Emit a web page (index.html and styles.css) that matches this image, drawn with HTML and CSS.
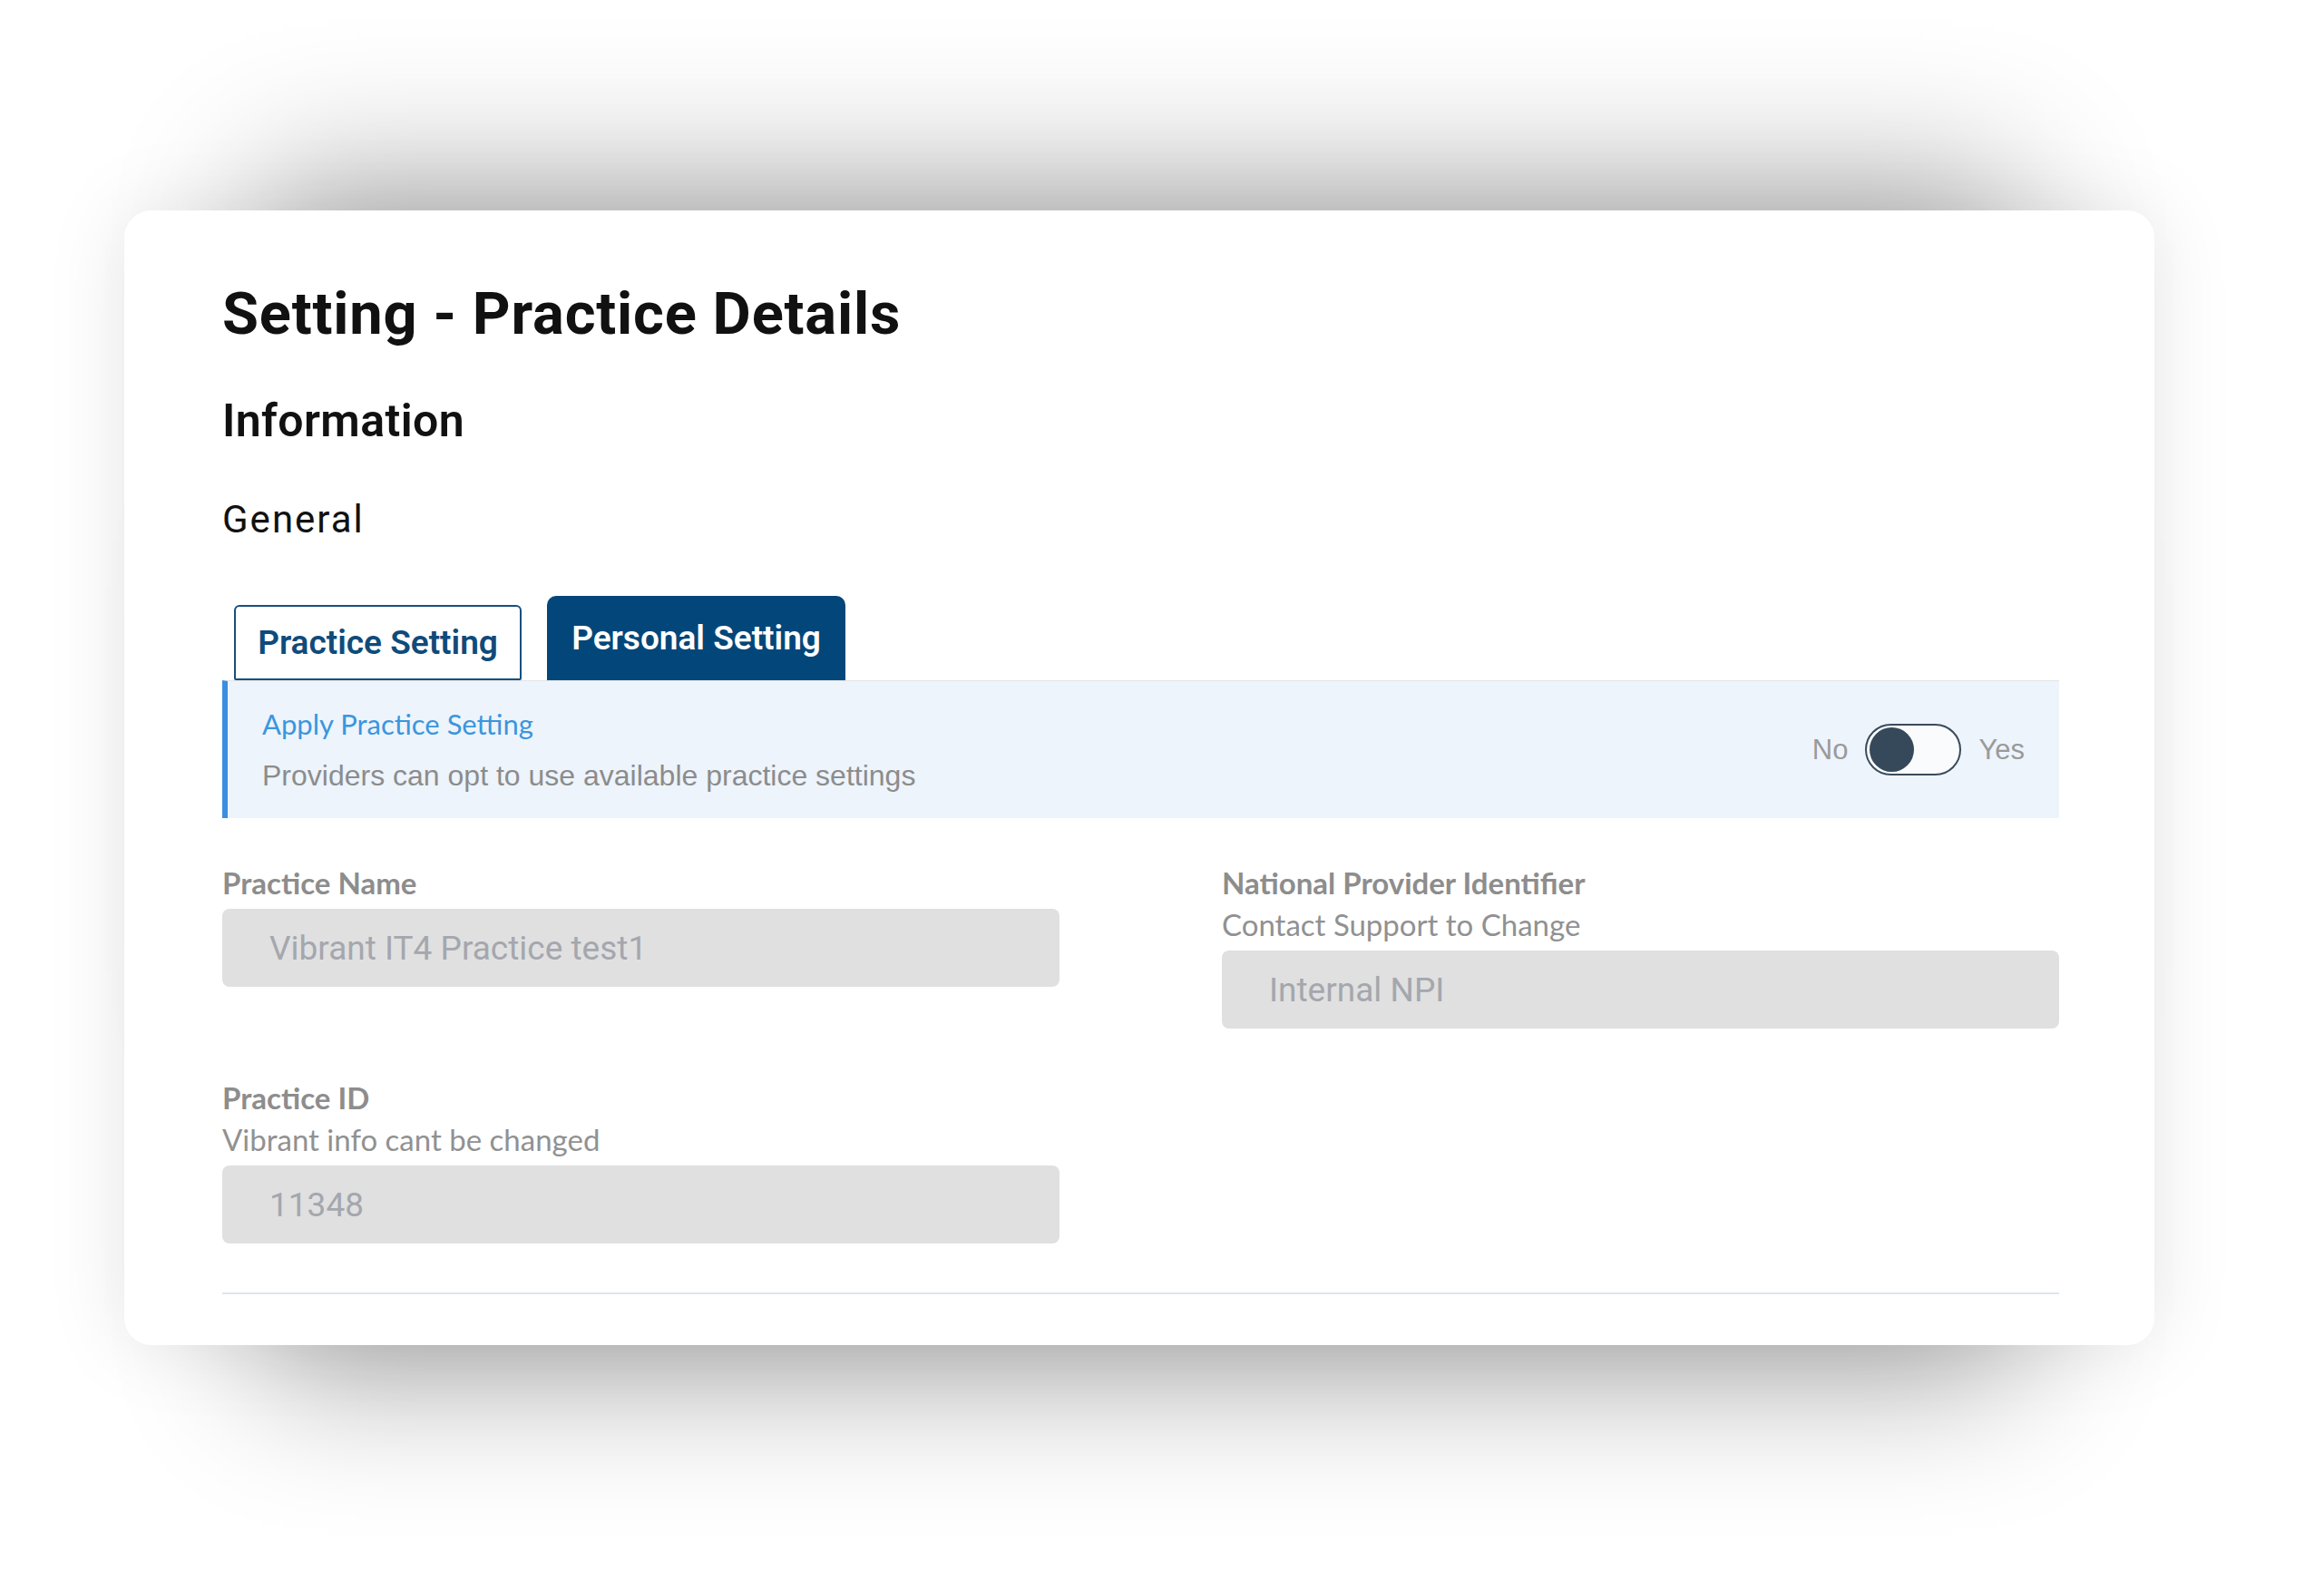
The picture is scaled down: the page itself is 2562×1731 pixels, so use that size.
FILE: index.html
```html
<!DOCTYPE html>
<html lang="en">
<head>
  <meta charset="UTF-8">
  <meta name="viewport" content="width=device-width, initial-scale=1.0">
  <title>Setting - Practice Details</title>
  <link rel="stylesheet" href="styles.css">
</head>
<body>
  <div class="stage">
    <div class="card">
      <h1 class="page-title">Setting - Practice Details</h1>
      <h2 class="section-title">Information</h2>
      <h3 class="group-title">General</h3>

      <div class="tabs">
        <button class="tab">Practice Setting</button>
        <button class="tab tab-active">Personal Setting</button>
      </div>

      <div class="apply-box">
        <div class="apply-text">
          <div class="apply-title">Apply Practice Setting</div>
          <div class="apply-desc">Providers can opt to use available practice settings</div>
        </div>
        <div class="switch-row">
          <span class="switch-label">No</span>
          <span class="switch"><span class="switch-knob"></span></span>
          <span class="switch-label">Yes</span>
        </div>
      </div>

      <div class="fields">
        <div class="field">
          <label class="field-label">Practice Name</label>
          <input class="field-input" type="text" value="Vibrant IT4 Practice test1" readonly>
        </div>
        <div class="field">
          <label class="field-label">National Provider Identifier</label>
          <div class="field-hint">Contact Support to Change</div>
          <input class="field-input" type="text" placeholder="Internal NPI" readonly>
        </div>
        <div class="field">
          <label class="field-label">Practice ID</label>
          <div class="field-hint">Vibrant info cant be changed</div>
          <input class="field-input" type="text" value="11348" readonly>
        </div>
      </div>

      <hr class="divider">
    </div>
  </div>
</body>
</html>
```

FILE: styles.css
```css
* {
  box-sizing: border-box;
  margin: 0;
  padding: 0;
}

html, body {
  min-height: 100%;
}

body {
  background-color: #ffffff;
  font-family: Roboto, "Noto Sans", sans-serif;
  color: #111111;
}

.stage {
  min-height: 1731px;
  padding: 232px 0 0 137px;
}

.card {
  width: 2238px;
  height: 1251px;
  background-color: #ffffff;
  border-radius: 30px;
  padding: 0 105px 0 108px;
  box-shadow:
    0 -190px 150px -150px rgba(0, 0, 0, 0.30),
    0 190px 150px -150px rgba(0, 0, 0, 0.33),
    0 0 90px rgba(0, 0, 0, 0.10);
}

.page-title {
  font-size: 65px;
  line-height: 65px;
  font-weight: 700;
  letter-spacing: 0.8px;
  padding-top: 82px;
}

.section-title {
  font-size: 50px;
  line-height: 50px;
  font-weight: 600;
  letter-spacing: 0.4px;
  margin-top: 60px;
}

.group-title {
  font-size: 42px;
  line-height: 42px;
  font-weight: 400;
  letter-spacing: 2px;
  margin-top: 63px;
}

.tabs {
  display: flex;
  align-items: flex-end;
  gap: 28px;
  padding-left: 13px;
  margin-top: 63px;
}

.tab {
  display: flex;
  align-items: center;
  justify-content: center;
  font-family: Roboto, "Noto Sans", sans-serif;
  font-size: 37px;
  font-weight: 600;
  cursor: pointer;
}

.tab:not(.tab-active) {
  width: 317px;
  height: 83px;
  background-color: #ffffff;
  color: #0f4b7b;
  border: 2px solid #174f7e;
  border-radius: 6px 6px 2px 2px;
}

.tab-active {
  width: 329px;
  height: 93px;
  background-color: #03477a;
  color: #ffffff;
  border: none;
  border-radius: 10px 10px 0 0;
}

.apply-box {
  display: flex;
  align-items: center;
  justify-content: space-between;
  height: 152px;
  background-color: #edf4fc;
  border-top: 1px solid #e2e4e7;
  border-left: 6px solid #3a8ee0;
  padding: 0 38px 0 38px;
}

.apply-title {
  font-family: Lato, sans-serif;
  font-size: 31px;
  line-height: 35px;
  color: #3b96dd;
}

.apply-desc {
  font-family: "Liberation Sans", Arial, sans-serif;
  font-size: 32px;
  line-height: 35px;
  color: #8c8c8c;
  margin-top: 22px;
}

.switch-row {
  display: flex;
  align-items: center;
  gap: 19px;
}

.switch-label {
  font-family: "Liberation Sans", Arial, sans-serif;
  font-size: 31px;
  color: #9a9a9a;
}

.switch {
  display: flex;
  align-items: center;
  width: 106px;
  height: 57px;
  border: 2px solid #3a4b5b;
  border-radius: 29px;
  background-color: #f9fbfd;
  padding: 0 0 0 3px;
}

.switch-knob {
  width: 49px;
  height: 49px;
  border-radius: 50%;
  background-color: #36495a;
}

.fields {
  display: grid;
  grid-template-columns: 923px 923px;
  column-gap: 179px;
  row-gap: 57px;
  margin-top: 52px;
}

.field {
  display: flex;
  flex-direction: column;
}

.field-label {
  font-family: Lato, sans-serif;
  font-size: 33px;
  line-height: 38px;
  font-weight: 700;
  color: #8d8d8d;
}

.field-hint {
  font-family: Lato, sans-serif;
  font-size: 33px;
  line-height: 38px;
  color: #919191;
  margin-top: 8px;
}

.field-input {
  height: 86px;
  margin-top: 10px;
  background-color: #e0e0e0;
  border: none;
  border-radius: 8px;
  padding: 0 52px;
  font-family: Roboto, "Noto Sans", sans-serif;
  font-size: 37px;
  color: #a4a7ae;
  outline: none;
}

.field-input::placeholder {
  color: #a4a7ae;
}

.divider {
  margin-top: 54px;
  border: none;
  border-top: 2px solid #dfe5ec;
}
```
